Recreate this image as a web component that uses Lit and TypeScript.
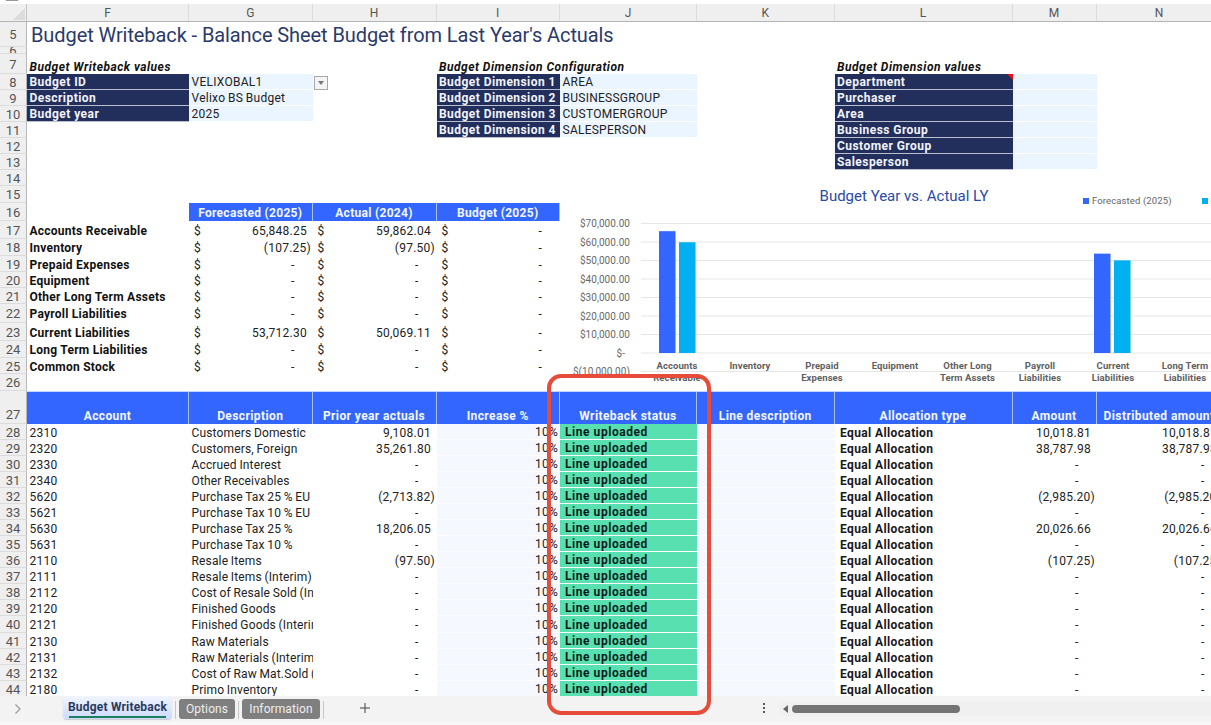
import { LitElement, html, css, svg, TemplateResult, nothing } from "lit";
import { customElement } from "lit/decorators.js";

const COLS = ["F", "G", "H", "I", "J", "K", "L", "M", "N"];

const fig = (v: string) => {
  if (v === "-") return html`<div class="cell num dash">-</div>`;
  if (v.startsWith("(")) return html`<div class="cell num neg">${v}</div>`;
  return html`<div class="cell num">${v}</div>`;
};

const acc = (v: string, cls = "") => html`<div class="cell acc ${cls}"><span>$</span><span class="${v === "-" ? "adash" : v.startsWith("(") ? "aneg" : "apos"}">${v}</span></div>`;

const DATA: [string, string, string, string][] = [
  ["2310", "Customers Domestic", "9,108.01", "10,018.81"],
  ["2320", "Customers, Foreign", "35,261.80", "38,787.98"],
  ["2330", "Accrued Interest", "-", "-"],
  ["2340", "Other Receivables", "-", "-"],
  ["5620", "Purchase Tax 25 % EU", "(2,713.82)", "(2,985.20)"],
  ["5621", "Purchase Tax 10 % EU", "-", "-"],
  ["5630", "Purchase Tax 25 %", "18,206.05", "20,026.66"],
  ["5631", "Purchase Tax 10 %", "-", "-"],
  ["2110", "Resale Items", "(97.50)", "(107.25)"],
  ["2111", "Resale Items (Interim)", "-", "-"],
  ["2112", "Cost of Resale Sold (Interim)", "-", "-"],
  ["2120", "Finished Goods", "-", "-"],
  ["2121", "Finished Goods (Interim)", "-", "-"],
  ["2130", "Raw Materials", "-", "-"],
  ["2131", "Raw Materials (Interim)", "-", "-"],
  ["2132", "Cost of Raw Mat.Sold (Interim)", "-", "-"],
  ["2180", "Primo Inventory", "-", "-"],
];

const SUMMARY: [number, number, string, string, string][] = [
  [17, 18, "Accounts Receivable", "65,848.25", "59,862.04"],
  [18, 17, "Inventory", "(107.25)", "(97.50)"],
  [19, 16, "Prepaid Expenses", "-", "-"],
  [20, 16, "Equipment", "-", "-"],
  [21, 16, "Other Long Term Assets", "-", "-"],
  [22, 19, "Payroll Liabilities", "-", "-"],
  [23, 18, "Current Liabilities", "53,712.30", "50,069.11"],
  [24, 17, "Long Term Liabilities", "-", "-"],
  [25, 16, "Common Stock", "-", "-"],
];

const AXIS: [string, number][] = [
  ["$70,000.00", 223.5], ["$60,000.00", 242], ["$50,000.00", 260.5], ["$40,000.00", 279],
  ["$30,000.00", 297.5], ["$20,000.00", 316], ["$10,000.00", 334.5], ["$-", 353], ["$(10,000.00)", 371.5],
];

const CATS: [number, string, string][] = [
  [677, "Accounts", "Receivable"], [750, "Inventory", ""], [822, "Prepaid", "Expenses"],
  [895, "Equipment", ""], [967.5, "Other Long", "Term Assets"], [1040, "Payroll", "Liabilities"],
  [1113, "Current", "Liabilities"], [1185, "Long Term", "Liabilities"],
];

const BARS: [number, number, string][] = [
  [659, 65848, "#3366ff"], [679, 59862, "#00b0f0"], [1094, 53712, "#3366ff"], [1114, 50069, "#00b0f0"],
];

@customElement("app-root")
export class AppRoot extends LitElement {
  static styles = css`
    :host { display: flex; flex-direction: column; position: relative; width: 1211px; height: 725px; overflow: hidden; background: #fff; font-family: Roboto, "Liberation Sans", sans-serif; font-size: 12px; color: #222; }
    .strip { height: 4px; flex: none; background: #fff; }
    .strip i { display: block; width: 12px; height: 1px; margin-left: 6px; background: #999; }
    .row { display: grid; grid-template-columns: 27px 162px 123.5px 124px 123.5px 137px 137.5px 178px 84px 126px; width: 1222px; flex: none; }
    .colhead { height: 17px; background: #efefef; border-bottom: 1px solid #b4b4b4; box-sizing: content-box; flex: none; }
    .colhead .h { display: flex; align-items: center; justify-content: center; color: #555; font-size: 12px; border-right: 1px solid #dcdcdc; }
    .corner { position: relative; border-right: 1px solid #c4c4c4; }
    .corner::after { content: ""; position: absolute; right: 1px; bottom: 1px; border-style: solid; border-width: 0 0 12px 12px; border-color: transparent transparent #dcdcdc transparent; }
    .sheet { position: relative; flex: 1 1 0; min-height: 0; overflow: hidden; display: flex; flex-direction: column; }
    .rn { display: flex; align-items: center; justify-content: center; background: #efefef; color: #555; font-size: 13px; border-right: 1px solid #b8b8b8; border-bottom: 1px solid #dcdcdc; overflow: hidden; padding-top: 1px; box-sizing: border-box; }
    .rn.end { align-items: flex-end; padding-bottom: 1px; }
    .cell { min-width: 0; display: flex; align-items: center; white-space: nowrap; padding-left: 2.5px; padding-top: 1px; box-sizing: border-box; letter-spacing: .25px; word-spacing: -.5px; }
    .clip { overflow: hidden; letter-spacing: .15px; }
    .title { font-size: 20px; color: #2b3a6b; padding-left: 4px; letter-spacing: -.09px; word-spacing: 0; align-items: flex-end; padding-bottom: 0; }
    .sec { font-weight: 700; font-style: italic; color: #111; align-items: flex-end; padding-bottom: 0; letter-spacing: .5px; word-spacing: 0; }
    .dark { background: #222f5c; color: #f2f4fa; font-weight: 700; border-bottom: 1px solid #b9bfcc; letter-spacing: .45px; word-spacing: 0; position: relative; }
    .pale { background: #ebf5ff; border-bottom: 1px solid #fff; }
    .faint { background: #f5f9ff; border-bottom: 1px solid #fff; }
    .drop { width: 14px; height: 14px; margin-left: -1.5px; background: #f4f4f4; border: 1px solid #a8a8a8; box-sizing: border-box; display: flex; align-items: center; justify-content: center; }
    .drop::after { content: ""; border-style: solid; border-width: 4px 3px 0 3px; border-color: #777 transparent transparent transparent; }
    .note { position: absolute; right: 0; top: 0; border-style: solid; border-width: 0 6px 6px 0; border-color: transparent #f01010 transparent transparent; }
    .blue { background: #3366ff; color: #f4f7ff; font-weight: 700; justify-content: center; border-right: 1px solid #a9c2ff; padding-left: 0; letter-spacing: .3px; word-spacing: 0; }
    .blue.bot { align-items: flex-end; padding-bottom: 1px; border-top: 1px solid #c5d4ff; letter-spacing: .4px; }
    .b { font-weight: 700; color: #111; word-spacing: 0; }
    .acc { justify-content: space-between; padding-left: 5px; }
    .apos { padding-right: 5.5px; }
    .aneg { padding-right: 1.5px; }
    .adash { padding-right: 18px; }
    .num { justify-content: flex-end; padding-right: 5.5px; }
    .num.neg { padding-right: 1.5px; }
    .num.dash { padding-right: 18px; }
    .pct { justify-content: flex-end; padding-right: 2px; }
    .ok { background: #58e0b0; color: #0b1f1c; font-weight: 700; border-bottom: 1px solid #fff; padding-left: 5px; letter-spacing: .55px; word-spacing: 0; }
    .alloc { font-weight: 700; color: #181818; padding-left: 5.5px; letter-spacing: .38px; word-spacing: 0; }
    .chart { position: absolute; left: 562px; top: 164px; width: 649px; height: 205px; }
    .chart text { font-family: Roboto, "Liberation Sans", sans-serif; }
    .ct { font-size: 15px; fill: #2a4aa5; }
    .lg { font-size: 9.5px; fill: #666; letter-spacing: .12px; }
    .ax { font-size: 10px; fill: #6a6a6a; letter-spacing: .05px; }
    .cat { font-size: 9.5px; font-weight: 700; fill: #5f5f5f; letter-spacing: .1px; }
    .tabs { flex: none; height: 26px; background: #f3f3f3; display: flex; align-items: flex-start; color: #555; }
    .foot { flex: none; height: 3px; background: #f8f8f8; }
    .chev { width: 63px; flex: none; display: flex; justify-content: flex-start; padding: 7px 0 0 14px; box-sizing: border-box; }
    .tab { flex: none; width: 109px; height: 23px; box-sizing: border-box; border-radius: 4px; background: linear-gradient(#f1f5ff, #cbdaff); color: #2a3a5c; font-weight: 700; font-size: 12px; letter-spacing: .2px; display: flex; flex-direction: column; align-items: center; padding-top: 4px; box-shadow: 0 1px 1px #ccc; }
    .tab i { display: block; width: 97px; height: 2px; margin-top: 2px; background: #1e8060; }
    .sep { flex: none; width: 1px; height: 18px; margin-top: 5px; background: #c8c8c8; }
    .gt { flex: none; height: 20px; margin-top: 3px; border-radius: 3px; background: #7f7f7f; color: #eee; font-size: 12px; letter-spacing: .1px; display: flex; align-items: center; justify-content: center; }
    .opt { width: 56px; margin-left: 3px; }
    .inf { width: 78px; margin-left: 3px; }
    .s1 { margin-left: 3px; }
    .s2 { margin-left: 3px; }
    .s3 { margin-left: 3px; }
    .plus { flex: none; margin: 6px 0 0 35px; width: 12px; height: 12px; }
    .dots { flex: none; margin: 7px 0 0 392px; width: 3px; display: flex; flex-direction: column; gap: 2px; }
    .dots i { display: block; width: 2px; height: 2px; background: #555; }
    .track { flex: 1; margin: 5px 0 0 13px; height: 15px; background: #f0f0f0; border-radius: 7px 0 0 7px; display: flex; align-items: center; padding-left: 4px; }
    .left { flex: none; border-style: solid; border-width: 4px 5px 4px 0; border-color: transparent #666 transparent transparent; margin-right: 4px; }
    .thumb { flex: none; width: 168px; height: 8px; border-radius: 4px; background: #747474; }
    .mark { position: absolute; left: 547px; top: 374px; width: 164px; height: 341px; box-sizing: border-box; border: 4px solid #e64c39; border-radius: 14px; pointer-events: none; }
  `;

  private row(n: number | string, h: number, cells: Partial<Record<string, TemplateResult>>, end = false) {
    return html`<div class="row" style="height:${h}px">
      <div class="rn ${end ? "end" : ""}">${n}</div>
      ${COLS.map((c) => cells[c] ?? html`<div class="cell"></div>`)}
    </div>`;
  }

  private chart() {
    return html`<svg class="chart" viewBox="562 186 649 205" aria-label="Budget Year vs. Actual LY">
      ${AXIS.map(([, y]) => svg`<line x1="641" x2="1211" y1=${y} y2=${y} stroke="#e6e6e6" stroke-width="1"></line>`)}
      ${BARS.map(([x, v, c]) => {
        const h = (v / 10000) * 18.5;
        return svg`<rect x=${x} y=${353 - h} width="16.5" height=${h} fill=${c}></rect>`;
      })}
      ${AXIS.map(([t, y]) => svg`<text class="ax" x=${t === "$-" ? 625 : 630} y=${y + 3.5} text-anchor="end">${t}</text>`)}
      ${CATS.map(([x, a, b]) => svg`
        <text class="cat" x=${x} y="369" text-anchor="middle">${a}</text>
        ${b ? svg`<text class="cat" x=${x} y="381" text-anchor="middle">${b}</text>` : nothing}
      `)}
      <text class="ct" x="904" y="201" text-anchor="middle">Budget Year vs. Actual LY</text>
      <rect x="1083" y="198" width="6" height="6" fill="#3366ff"></rect>
      <text class="lg" x="1092" y="204">Forecasted (2025)</text>
      <rect x="1202" y="198" width="6" height="6" fill="#00b0f0"></rect>
      <text class="lg" x="1211" y="204">Actual (2024)</text>
    </svg>`;
  }

  render() {
    const head = ["Account", "Description", "Prior year actuals", "Increase %", "Writeback status", "Line description", "Allocation type", "Amount", "Distributed amount"];
    return html`
      <div class="strip"><i></i></div>
      <div class="row colhead">
        <div class="corner"></div>
        ${COLS.map((c) => html`<div class="h">${c}</div>`)}
      </div>
      <div class="sheet">
        ${this.row(5, 25, { F: html`<div class="cell title">Budget Writeback - Balance Sheet Budget from Last Year's Actuals</div>` })}
        ${this.row(6, 7, {})}
        ${this.row(7, 20, {
          F: html`<div class="cell sec">Budget Writeback values</div>`,
          I: html`<div class="cell sec">Budget Dimension Configuration</div>`,
          L: html`<div class="cell sec">Budget Dimension values</div>`,
        })}
        ${this.row(8, 16, {
          F: html`<div class="cell dark">Budget ID</div>`,
          G: html`<div class="cell pale">VELIXOBAL1</div>`,
          H: html`<div class="cell"><span class="drop"></span></div>`,
          I: html`<div class="cell dark">Budget Dimension 1</div>`,
          J: html`<div class="cell pale">AREA</div>`,
          L: html`<div class="cell dark">Department<span class="note"></span></div>`,
          M: html`<div class="cell pale"></div>`,
        })}
        ${this.row(9, 16, {
          F: html`<div class="cell dark">Description</div>`,
          G: html`<div class="cell pale">Velixo BS Budget</div>`,
          I: html`<div class="cell dark">Budget Dimension 2</div>`,
          J: html`<div class="cell pale">BUSINESSGROUP</div>`,
          L: html`<div class="cell dark">Purchaser</div>`,
          M: html`<div class="cell pale"></div>`,
        })}
        ${this.row(10, 16, {
          F: html`<div class="cell dark">Budget year</div>`,
          G: html`<div class="cell pale">2025</div>`,
          I: html`<div class="cell dark">Budget Dimension 3</div>`,
          J: html`<div class="cell pale">CUSTOMERGROUP</div>`,
          L: html`<div class="cell dark">Area</div>`,
          M: html`<div class="cell pale"></div>`,
        })}
        ${this.row(11, 16, {
          I: html`<div class="cell dark">Budget Dimension 4</div>`,
          J: html`<div class="cell pale">SALESPERSON</div>`,
          L: html`<div class="cell dark">Business Group</div>`,
          M: html`<div class="cell pale"></div>`,
        })}
        ${this.row(12, 16, { L: html`<div class="cell dark">Customer Group</div>`, M: html`<div class="cell pale"></div>` })}
        ${this.row(13, 16, { L: html`<div class="cell dark">Salesperson</div>`, M: html`<div class="cell pale"></div>` })}
        ${this.row(14, 16, {})}
        ${this.row(15, 17, {})}
        ${this.row(16, 18, {
          G: html`<div class="cell blue">Forecasted (2025)</div>`,
          H: html`<div class="cell blue">Actual (2024)</div>`,
          I: html`<div class="cell blue">Budget (2025)</div>`,
        })}
        ${SUMMARY.map(([n, h, name, f, a]) =>
          this.row(n, h, {
            F: html`<div class="cell b">${name}</div>`,
            G: acc(f),
            H: acc(a),
            I: acc("-"),
          })
        )}
        ${this.row(26, 17, {})}
        ${this.row(27, 33, Object.fromEntries(COLS.map((c, i) => [c, html`<div class="cell blue bot">${head[i]}</div>`])), true)}
        ${DATA.map(([acct, d, prior, amt], i) =>
          this.row(28 + i, i === 12 ? 17 : 16, {
            F: html`<div class="cell">${acct}</div>`,
            G: html`<div class="cell clip">${d}</div>`,
            H: fig(prior),
            I: html`<div class="cell faint pct">10%</div>`,
            J: html`<div class="cell ok">Line uploaded</div>`,
            K: html`<div class="cell faint"></div>`,
            L: html`<div class="cell alloc">Equal Allocation</div>`,
            M: fig(amt),
            N: fig(amt),
          })
        )}
        ${this.chart()}
      </div>
      <div class="tabs">
        <div class="chev"><svg width="8" height="12" viewBox="0 0 8 12"><path d="M1.5 1.5 6 6l-4.5 4.500" fill="none" stroke="#999" stroke-width="1.200"/></svg></div>
        <div class="tab">Budget Writeback<i></i></div>
        <span class="sep s1"></span>
        <div class="gt opt">Options</div>
        <span class="sep s2"></span>
        <div class="gt inf">Information</div>
        <span class="sep s3"></span>
        <svg class="plus" viewBox="0 0 12 12"><path d="M6 1v10M1 6h10" stroke="#444" stroke-width="1"/></svg>
        <div class="dots"><i></i><i></i><i></i></div>
        <div class="track"><span class="left"></span><span class="thumb"></span></div>
      </div>
      <div class="foot"></div>
      <div class="mark"></div>
    `;
  }
}
